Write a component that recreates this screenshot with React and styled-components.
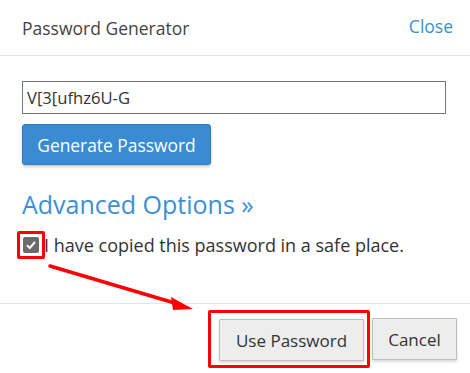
import React from "react";
import styled, { createGlobalStyle } from "styled-components";

const Global = createGlobalStyle`
  html, body { margin: 0; padding: 0; background: #fff; }
  body { font-family: "Open Sans", "Liberation Sans", sans-serif; color: #333; }
  * { box-sizing: border-box; }
`;

const Modal = styled.div`
  position: relative;
  width: 470px;
  height: 373px;
  background: #fff;
  display: flex;
  flex-direction: column;
`;

const Header = styled.div`
  height: 56px;
  border-bottom: 1px solid #e5e5e5;
  display: flex;
  align-items: center;
  justify-content: space-between;
  padding: 0 17px 0 22px;
`;

const Title = styled.h4`
  margin: 0;
  font-size: 17.5px;
  font-weight: 400;
  color: #444;
`;

const CloseLink = styled.a`
  font-size: 17.5px;
  color: #3d8fd4;
  text-decoration: none;
  margin-top: -4px;
`;

const Body = styled.div`
  height: 248px;
  border-bottom: 1px solid #e5e5e5;
  padding: 25px 24px 0 22px;
  display: flex;
  flex-direction: column;
  align-items: flex-start;
`;

const PasswordInput = styled.input`
  width: 424px;
  height: 33px;
  border: 1px solid #767676;
  padding: 0 4px;
  font-family: inherit;
  font-size: 16.6px;
  color: #333;
  outline: none;
`;

const PrimaryButton = styled.button`
  margin-top: 10px;
  width: 189px;
  height: 41px;
  background: #3a8bd2;
  border: 1px solid #2f7bbf;
  border-radius: 3px;
  color: #fff;
  font-family: inherit;
  font-size: 17.4px;
  box-shadow: 0 2px 3px rgba(0, 0, 0, 0.2);
`;

const AdvancedLink = styled.a`
  margin-top: 21px;
  font-size: 25px;
  color: #3d8fd4;
  text-decoration: none;
  line-height: 36px;
`;

const CheckRow = styled.label`
  margin-top: 9px;
  display: flex;
  align-items: center;
  font-size: 18px;
  color: #333;
  margin-left: -5px;
`;

const CheckText = styled.span`
  margin-left: -1px;
`;

const Highlight = styled.span`
  display: inline-flex;
  align-items: center;
  justify-content: center;
  border: 3px solid #f00;
  border-radius: 2px;
  padding: ${(p) => p.$pad || "3px"};
`;

const Box = styled.span`
  width: 16px;
  height: 16px;
  background: #6b6b6b;
  border-radius: 2px;
  display: inline-flex;
  align-items: center;
  justify-content: center;
`;

const Footer = styled.div`
  flex: 1;
  display: flex;
  justify-content: flex-end;
  align-items: center;
  padding: 1px 13px 0 0;
  gap: 2px;
`;

const DefaultButton = styled.button`
  height: 42px;
  width: ${(p) => p.$w}px;
  padding: 0;
  background: #ededed;
  border: 1px solid #bdbdbd;
  border-radius: 1px;
  color: #333;
  font-family: inherit;
  font-size: 17px;
  box-shadow: 0 2px 3px rgba(0, 0, 0, 0.15);
`;

const Arrow = styled.svg`
  position: absolute;
  left: 0;
  top: 0;
  pointer-events: none;
`;

export default function App() {
  return (
    <>
      <Global />
      <Modal>
        <Header>
          <Title>Password Generator</Title>
          <CloseLink href="#">Close</CloseLink>
        </Header>
        <Body>
          <PasswordInput readOnly value="V[3[ufhz6U-G" />
          <PrimaryButton>Generate Password</PrimaryButton>
          <AdvancedLink href="#">Advanced Options »</AdvancedLink>
          <CheckRow>
            <Highlight>
              <Box>
                <svg width="12" height="12" viewBox="0 0 12 12">
                  <path d="M2 6.3 L4.8 9 L10 3" stroke="#fff" strokeWidth="2" fill="none" />
                </svg>
              </Box>
            </Highlight>
            <CheckText>I have copied this password in a safe place.</CheckText>
          </CheckRow>
        </Body>
        <Footer>
          <Highlight $pad="6px 3px 4px 8px">
            <DefaultButton $w={145}>Use Password</DefaultButton>
          </Highlight>
          <DefaultButton $w={85}>Cancel</DefaultButton>
        </Footer>
        <Arrow width="470" height="373" viewBox="0 0 470 373">
          <line x1="50" y1="266" x2="178" y2="304" stroke="#f00" strokeWidth="3.5" strokeLinecap="round" />
          <polygon points="193,309 171,297 173,310" fill="#f00" />
        </Arrow>
      </Modal>
    </>
  );
}
